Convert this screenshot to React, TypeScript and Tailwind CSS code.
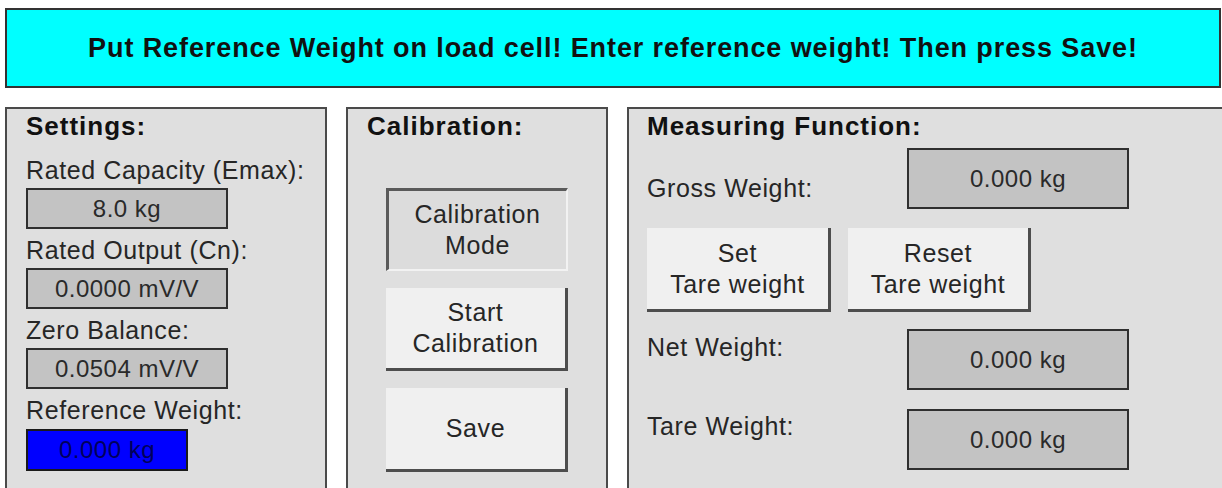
const font = { fontFamily: '"Liberation Sans", Arial, sans-serif' };

const Label = ({ children, className = '' }: { children: React.ReactNode; className?: string }) => (
  <div className={`h-[26px] leading-[26px] text-[25px] tracking-[0.6px] text-[#262626] whitespace-nowrap ${className}`}>
    {children}
  </div>
);

const Heading = ({ children }: { children: React.ReactNode }) => (
  <div className="h-[26px] leading-[26px] text-[26px] font-bold tracking-[1px] text-[#111] whitespace-nowrap">
    {children}
  </div>
);

const ValueBox = ({ value, className = '' }: { value: string; className?: string }) => (
  <div
    className={`flex items-center justify-center border-2 border-[#2f2f2f] bg-[#c3c3c3] text-[24px] tracking-[0.5px] text-[#2a2a2a] whitespace-nowrap ${className}`}
  >
    {value}
  </div>
);

const RaisedButton = ({ lines, className = '' }: { lines: string[]; className?: string }) => (
  <button
    className={`flex flex-col items-center justify-center border-r-[3px] border-b-[3px] border-[#4d4d4d] bg-[#f0f0f0] text-[25px] leading-[31px] tracking-[0.6px] text-[#262626] ${className}`}
  >
    {lines.map((l) => (
      <span key={l} className="whitespace-nowrap">{l}</span>
    ))}
  </button>
);

const SettingsPanel = () => {
  const rows = [
    { label: 'Rated Capacity (Emax):', value: '8.0 kg' },
    { label: 'Rated Output (Cn):', value: '0.0000 mV/V' },
    { label: 'Zero Balance:', value: '0.0504 mV/V' },
  ];
  return (
    <section className="w-[322px] h-[400px] shrink-0 border-2 border-[#4a4a4a] bg-[#dfdfdf] pl-[19px] pt-[4px]">
      <Heading>Settings:</Heading>
      <div className="mt-[18px] flex flex-col gap-[8px]">
        {rows.map((r) => (
          <div key={r.label}>
            <Label>{r.label}</Label>
            <ValueBox value={r.value} className="mt-[5px] w-[202px] h-[41px]" />
          </div>
        ))}
        <div>
          <Label>Reference Weight:</Label>
          <div className="mt-[6px] w-[162px] h-[42px] flex items-center justify-center border-2 border-[#1a1a1a] bg-[#0000ff] text-[24px] tracking-[0.5px] text-[#00005a]">
            0.000 kg
          </div>
        </div>
      </div>
    </section>
  );
};

const CalibrationPanel = () => (
  <section className="w-[262px] h-[400px] shrink-0 border-2 border-[#4a4a4a] bg-[#dfdfdf] pl-[19px] pt-[4px]">
    <Heading>Calibration:</Heading>
    <div className="mt-[49px] flex flex-col gap-[17px] pl-[19px]">
      <div className="w-[182px] h-[83px] flex flex-col items-center justify-center border-t-[3px] border-l-[3px] border-r-2 border-b-2 border-t-[#5a5a5a] border-l-[#5a5a5a] border-r-[#f2f2f2] border-b-[#f2f2f2] bg-[#dcdcdc] text-[25px] leading-[31px] tracking-[0.6px] text-[#262626]">
        <span>Calibration</span>
        <span>Mode</span>
      </div>
      <RaisedButton lines={['Start', 'Calibration']} className="w-[182px] h-[83px]" />
      <RaisedButton lines={['Save']} className="w-[182px] h-[84px]" />
    </div>
  </section>
);

const MeasuringPanel = () => (
  <section className="w-[620px] h-[400px] shrink-0 border-2 border-[#4a4a4a] bg-[#dfdfdf] pl-[18px] pt-[4px]">
    <Heading>Measuring Function:</Heading>
    <div className="mt-[9px] flex">
      <Label className="w-[260px] mt-[27px]">Gross Weight:</Label>
      <ValueBox value="0.000 kg" className="w-[222px] h-[61px]" />
    </div>
    <div className="mt-[19px] flex gap-[17px]">
      <RaisedButton lines={['Set', 'Tare weight']} className="w-[184px] h-[84px]" />
      <RaisedButton lines={['Reset', 'Tare weight']} className="w-[183px] h-[84px]" />
    </div>
    <div className="mt-[17px] flex">
      <Label className="w-[260px] mt-[5px]">Net Weight:</Label>
      <ValueBox value="0.000 kg" className="w-[222px] h-[61px]" />
    </div>
    <div className="mt-[19px] flex">
      <Label className="w-[260px] mt-[4px]">Tare Weight:</Label>
      <ValueBox value="0.000 kg" className="w-[222px] h-[61px]" />
    </div>
  </section>
);

export default function App() {
  return (
    <div className="w-[1222px] h-[488px] overflow-hidden bg-white" style={font}>
      <div className="ml-[5px] mt-[8px] w-[1216px] h-[80px] border-2 border-[#333] bg-[#00ffff] flex items-center justify-center">
        <span className="text-[27px] font-bold tracking-[0.9px] text-[#111] whitespace-nowrap">
          Put Reference Weight on load cell! Enter reference weight! Then press Save!
        </span>
      </div>
      <div className="mt-[19px] pl-[5px] flex gap-[19px]">
        <SettingsPanel />
        <CalibrationPanel />
        <MeasuringPanel />
      </div>
    </div>
  );
}
